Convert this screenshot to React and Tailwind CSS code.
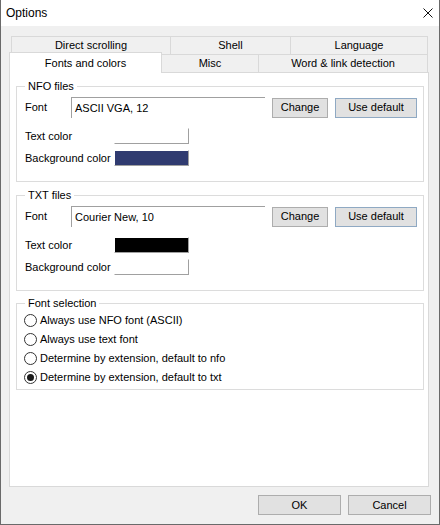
import React from 'react';

const font = { fontFamily: '"Liberation Sans", Arial, sans-serif' };

const Btn = ({ children, w, focus }) => (
  <div
    className={`h-[20px] ${w} flex items-center justify-center bg-[#e1e1e1] border ${focus ? 'border-[#8fa9c3]' : 'border-[#adadad]'}`}
  >
    {children}
  </div>
);

const ColorBox = ({ color }) => (
  <div className={`w-[75px] h-[16px] border border-t-white border-l-white border-r-[#a0a0a0] border-b-[#a0a0a0] ${color}`} />
);

const Group = ({ title, className, children }) => (
  <div className={`relative w-[408px] border border-[#dcdcdc] ${className}`}>
    <span className="absolute -top-[8px] left-[8px] px-[3px] bg-white leading-[14px]">{title}</span>
    {children}
  </div>
);

const FileGroup = ({ title, fontName, textColor, bgColor, className }) => (
  <Group title={title} className={`pt-[10px] pb-[15px] pl-[8px] ${className}`}>
    <div className="flex items-center">
      <span className="w-[46px]">Font</span>
      <div className="w-[194px] h-[21px] border-t border-l border-[#a0a0a0] pl-[3px] flex items-center">
        {fontName}
      </div>
      <div className="ml-[7px]"><Btn w="w-[56px]">Change</Btn></div>
      <div className="ml-[7px]"><Btn w="w-[82px]" focus>Use default</Btn></div>
    </div>
    <div className="mt-[10px] flex items-center">
      <span className="w-[89px]">Text color</span>
      <ColorBox color={textColor} />
    </div>
    <div className="mt-[5px] flex items-center">
      <span className="w-[89px]">Background color</span>
      <ColorBox color={bgColor} />
    </div>
  </Group>
);

const Radio = ({ label, checked }) => (
  <div className="h-[19px] flex items-center">
    <div className="ml-[7px] w-[13px] h-[13px] rounded-full border border-[#333] bg-white flex items-center justify-center">
      {checked && <div className="w-[7px] h-[7px] rounded-full bg-[#1a1a1a]" />}
    </div>
    <span className="ml-[3px]">{label}</span>
  </div>
);

export default function App() {
  return (
    <div className="w-[440px] h-[525px] flex flex-col border-x border-b border-[#6a6a6a] text-[11px] text-black bg-[#f0f0f0]" style={font}>
      <div className="h-[26px] shrink-0 bg-white flex items-center justify-between pl-[5px] pr-[6px]">
        <span className="text-[12px]">Options</span>
        <svg width="10" height="10" viewBox="0 0 10 10">
          <path d="M0.5 0.5 L9.5 9.5 M9.5 0.5 L0.5 9.5" stroke="#111" strokeWidth="1" />
        </svg>
      </div>

      <div className="flex-1 flex flex-col pt-[10px] pl-[8px] pr-[10px]">
        <div className="flex ml-[2px] h-[19px]">
          <div className="w-[160px] border border-[#d9d9d9] flex items-center justify-center">Direct scrolling</div>
          <div className="w-[121px] -ml-px border border-[#d9d9d9] flex items-center justify-center">Shell</div>
          <div className="w-[138px] -ml-px border border-[#d9d9d9] flex items-center justify-center">Language</div>
        </div>
        <div className="flex items-end h-[17px]">
          <div className="relative z-10 w-[153px] h-[21px] -mb-px bg-white border-x border-t border-[#d9d9d9] flex items-center justify-center">
            Fonts and colors
          </div>
          <div className="w-[97px] h-[17px] border-r border-[#d9d9d9] flex items-center justify-center">Misc</div>
          <div className="w-[169px] h-[17px] border-r border-[#d9d9d9] flex items-center justify-center">Word &amp; link detection</div>
        </div>

        <div className="w-[420px] h-[415px] bg-white border border-[#d9d9d9] pt-[13px] pl-[6px]">
          <FileGroup title="NFO files" fontName="ASCII VGA, 12" textColor="bg-white" bgColor="bg-[#303b70]" />
          <FileGroup title="TXT files" fontName="Courier New, 10" textColor="bg-black" bgColor="bg-white" className="mt-[13px]" />
          <Group title="Font selection" className="mt-[12px] pt-[7px] pb-[2px]">
            <Radio label="Always use NFO font (ASCII)" />
            <Radio label="Always use text font" />
            <Radio label="Determine by extension, default to nfo" />
            <Radio label="Determine by extension, default to txt" checked />
          </Group>
        </div>

        <div className="mt-[8px] flex justify-end gap-[7px] mr-[-2px]">
          <Btn w="w-[83px]">OK</Btn>
          <Btn w="w-[83px]">Cancel</Btn>
        </div>
      </div>
    </div>
  );
}
